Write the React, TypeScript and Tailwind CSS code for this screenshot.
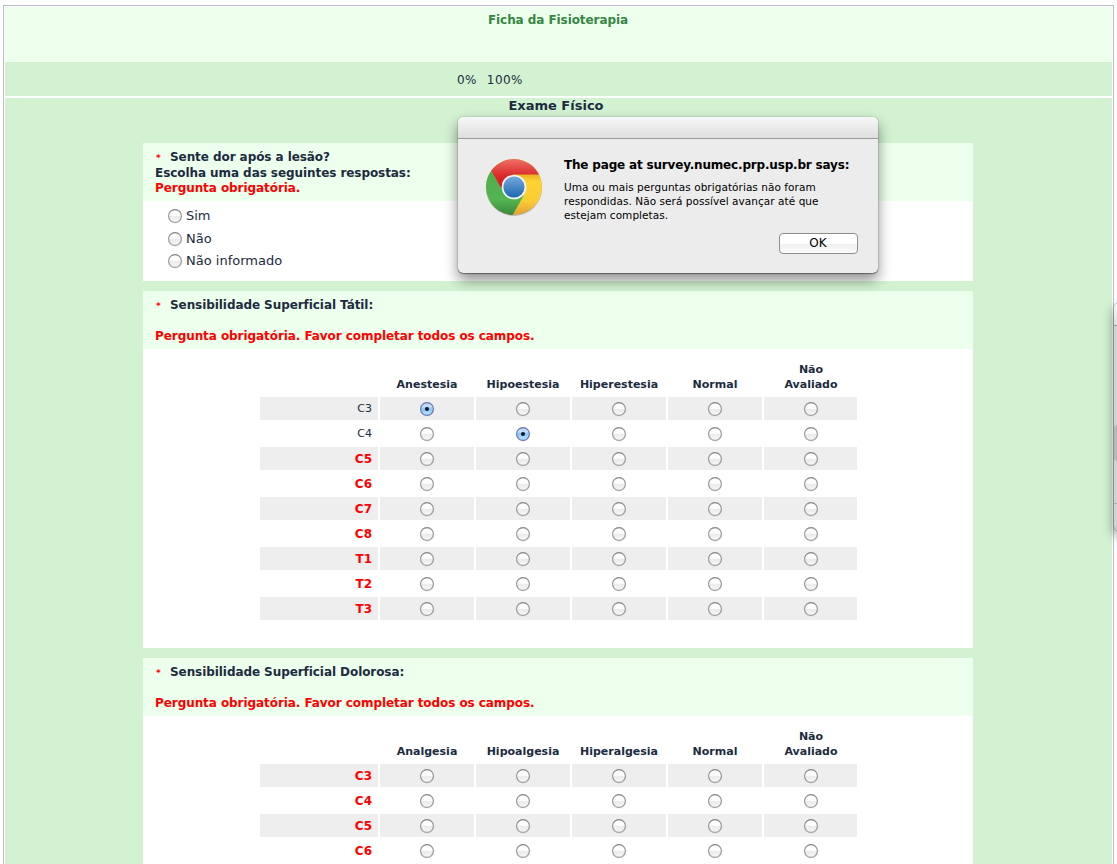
import React from "react";

type Row = { label: string; selected?: number; answered?: boolean };

function Radio({ on = false }: { on?: boolean }) {
  return (
    <svg className="block h-[16px] w-[16px] shrink-0" viewBox="0 0 16 16">
      <defs>
        <linearGradient id="radio-off" x1="0" y1="0" x2="0" y2="1">
          <stop offset="0" stopColor="#f3f3f3" />
          <stop offset=".2" stopColor="#ffffff" />
          <stop offset=".48" stopColor="#fbfbfb" />
          <stop offset=".54" stopColor="#ebebeb" />
          <stop offset="1" stopColor="#f8f8f8" />
        </linearGradient>
        <linearGradient id="radio-on" x1="0" y1="0" x2="0" y2="1">
          <stop offset="0" stopColor="#b7d2f2" />
          <stop offset=".3" stopColor="#c3def8" />
          <stop offset=".5" stopColor="#8fc4f4" />
          <stop offset="1" stopColor="#b5e6ff" />
        </linearGradient>
        <linearGradient id="radio-edge" x1="0" y1="0" x2="0" y2="1">
          <stop offset="0" stopColor="#868686" />
          <stop offset="1" stopColor="#a0a0a0" />
        </linearGradient>
      </defs>
      <circle cx="8" cy="8.4" r="6.8" fill="none" stroke="#000" strokeOpacity=".07" />
      <circle
        cx="8"
        cy="8"
        r="6.4"
        fill={on ? "url(#radio-on)" : "url(#radio-off)"}
        stroke={on ? "#6676b0" : "url(#radio-edge)"}
        strokeWidth="1.1"
      />
      {on && <circle cx="8" cy="8" r="2.1" fill="#0a1a35" />}
    </svg>
  );
}

function Title({ children }: { children: React.ReactNode }) {
  return (
    <div className="flex h-[16px] items-center whitespace-nowrap">
      <span className="w-[15px] pt-[2px] pl-px text-[9px] leading-[16px] text-[#ff0000]">*</span>
      <span>{children}</span>
    </div>
  );
}

function MatrixQuestion({
  title,
  columns,
  rows,
  name,
}: {
  title: string;
  columns: string[];
  rows: Row[];
  name: string;
}) {
  return (
    <section className="w-[830px] bg-white pb-[28px]">
      <header className="h-[58px] bg-[#edffed] px-[12px] pt-[6px] text-[12px] font-bold tracking-[-0.07px]">
        <Title>{title}</Title>
        <p className="mt-[15px] h-[16px] leading-[16px] whitespace-nowrap text-[#ff0000]">
          Pergunta obrigatória. Favor completar todos os campos.
        </p>
      </header>
      <div className="ml-[117px] flex flex-col gap-[2px] pt-[10px]">
        <div className="flex h-[36px] items-end gap-[2px] pb-[3px] text-[11px] leading-[15px] font-bold">
          <span className="w-[118px]" />
          {columns.map((c) => (
            <span key={c} className="w-[94px] text-center whitespace-pre-line">
              {c}
            </span>
          ))}
        </div>
        {rows.map((row, i) => (
          <div key={name + row.label} className="flex h-[23px] gap-[2px]">
            <div
              className={`flex w-[118px] items-center justify-end pr-[6px] ${
                i % 2 === 0 ? "bg-[#eeeeee]" : ""
              } ${row.answered ? "pt-[2px] text-[11px]" : "text-[12px] font-bold text-[#ff0000]"}`}
            >
              {row.label}
            </div>
            {columns.map((c, j) => (
              <div
                key={c}
                className={`flex justify-center pt-[4px] ${
                  j === columns.length - 1 ? "w-[93px] pl-px" : "w-[94px]"
                } ${i % 2 === 0 ? "bg-[#eeeeee]" : ""}`}
              >
                <Radio on={row.selected === j} />
              </div>
            ))}
          </div>
        ))}
      </div>
    </section>
  );
}

function ChromeLogo() {
  return (
    <svg className="block h-[60px] w-[60px]" viewBox="0 0 60 60">
      <defs>
        <linearGradient id="c-red" x1="0" y1="0" x2="0" y2="1">
          <stop offset="0" stopColor="#ee7163" />
          <stop offset=".55" stopColor="#da2a2c" />
          <stop offset="1" stopColor="#d2161d" />
        </linearGradient>
        <linearGradient id="c-yellow" x1="0" y1="0" x2="0" y2="1">
          <stop offset="0" stopColor="#e5ac25" />
          <stop offset=".28" stopColor="#e8b127" />
          <stop offset=".4" stopColor="#fdd232" />
          <stop offset=".75" stopColor="#fbcd34" />
          <stop offset="1" stopColor="#e0a038" />
        </linearGradient>
        <linearGradient id="c-green" x1="0" y1="0" x2="0" y2="1">
          <stop offset="0" stopColor="#4fae50" />
          <stop offset=".65" stopColor="#54b453" />
          <stop offset="1" stopColor="#388a3c" />
        </linearGradient>
        <linearGradient id="c-blue" x1="0" y1="0" x2="0" y2="1">
          <stop offset="0" stopColor="#77a9dc" />
          <stop offset="1" stopColor="#1c67b0" />
        </linearGradient>
      </defs>
      <circle cx="30" cy="30.8" r="28.2" fill="#000" opacity=".22" />
      <circle cx="30" cy="30" r="28" fill="url(#c-yellow)" />
      <path
        d="M7.2 13.8 A28 28 0 0 0 28.6 58 L39.9 38.2 L30 42 L17.6 31 Z"
        fill="url(#c-green)"
      />
      <path
        d="M7.2 13.8 A28 28 0 0 1 54.9 17.4 L30 17.4 L19 24 L17.6 31.8 Z"
        fill="url(#c-red)"
      />
      <circle cx="30" cy="30" r="12.3" fill="#f5f6f7" />
      <circle cx="30" cy="30" r="10.6" fill="url(#c-blue)" />
    </svg>
  );
}

function AlertDialog() {
  return (
    <div
      role="dialog"
      className="absolute top-[117px] left-[458px] h-[156px] w-[420px] overflow-visible rounded-[5px] bg-[#ececec] text-black shadow-[0_0_1px_rgba(0,0,0,0.7),0_1px_1px_rgba(0,0,0,0.35),0_7px_14px_rgba(0,0,0,0.45)]"
    >
      <div className="h-[22px] rounded-t-[5px] border-b border-[#9b9b9b] bg-linear-to-b from-[#f8f8f8] to-[#dedede]" />
      <div className="flex pt-[18px] pl-[26px]">
        <ChromeLogo />
        <div className="ml-[20px] w-[294px]">
          <h2 className="h-[16px] text-[12px] leading-[16px] font-bold tracking-[-0.18px] whitespace-nowrap">
            The page at survey.numec.prp.usp.br says:
          </h2>
          <p className="mt-[7px] text-[10.5px] leading-[14px] tracking-[0.05px] whitespace-nowrap">
            Uma ou mais perguntas obrigatórias não foram
            <br />
            respondidas. Não será possível avançar até que
            <br />
            estejam completas.
          </p>
          <button className="mt-[11px] ml-auto block h-[21px] w-[79px] rounded-[4px] border border-[#8e8e8e] bg-linear-to-b from-white from-50% via-[#f1f1f1] via-55% to-[#fbfbfb] pr-px text-[12px] leading-[19px]">
            OK
          </button>
        </div>
      </div>
    </div>
  );
}

function EdgeWindow() {
  return (
    <div className="absolute top-[303px] left-[1114px] h-[228px] w-[20px] rounded-[5px] bg-[#d3d3d3] shadow-[0_0_1px_rgba(0,0,0,0.7),0_5px_12px_rgba(0,0,0,0.45)]">
      <div className="h-[23px] rounded-t-[5px] border-b border-[#9b9b9b] bg-linear-to-b from-[#fafafa] to-[#e0e0e0]" />
      <div className="mt-[99px] h-[36px] rounded-l-[3px] bg-[#b8b8b8]" />
      <div className="mt-[42px] border-t border-[#b0b0b0]" />
    </div>
  );
}

const tactile: Row[] = [
  { label: "C3", selected: 0, answered: true },
  { label: "C4", selected: 1, answered: true },
  { label: "C5" },
  { label: "C6" },
  { label: "C7" },
  { label: "C8" },
  { label: "T1" },
  { label: "T2" },
  { label: "T3" },
];

const painful: Row[] = [
  { label: "C3" },
  { label: "C4" },
  { label: "C5" },
  { label: "C6" },
];

export default function App() {
  return (
    <div className="relative h-[864px] w-[1117px] overflow-hidden bg-white pt-[5px] pl-[3px] font-['Verdana','DejaVu_Sans',sans-serif] text-[#1c2b40]">
      <div className="h-[900px] w-[1111px] border border-[#bcbdc6] p-px">
        <div className="h-[55px] bg-[#edffed] pt-[5px] pr-px text-center text-[12px] leading-[16px] font-bold tracking-[-0.07px] text-[#358642]">
          Ficha da Fisioterapia
        </div>
        <div className="flex h-[34px] items-center gap-[10px] bg-[#d2f2d2] pt-[2px] pl-[452px] text-[12px] tracking-[0.4px]">
          <span>0%</span>
          <span>100%</span>
        </div>
        <main className="mt-[2px] flex h-[900px] flex-col items-center gap-[10px] bg-[#d2f2d2] pr-px">
          <h1 className="h-[35px] pr-[4px] text-[13px] leading-[16px] font-bold">Exame Físico</h1>
          <section className="h-[138px] w-[830px] bg-white">
            <header className="h-[58px] bg-[#edffed] px-[12px] pt-[6px] text-[12px] leading-[16px] font-bold tracking-[-0.07px] whitespace-nowrap">
              <Title>Sente dor após a lesão?</Title>
              <p>Escolha uma das seguintes respostas:</p>
              <p className="leading-[15px] text-[#ff0000]">Pergunta obrigatória.</p>
            </header>
            <div className="flex flex-col gap-[7px] pt-[7px] pl-[24px] text-[13px] leading-[16px]">
              {["Sim", "Não", "Não informado"].map((o) => (
                <label key={o} className="flex h-[16px] items-center gap-[3px] last:-mt-px">
                  <Radio />
                  <span>{o}</span>
                </label>
              ))}
            </div>
          </section>
          <MatrixQuestion
            name="tatil"
            title="Sensibilidade Superficial Tátil:"
            columns={["Anestesia", "Hipoestesia", "Hiperestesia", "Normal", "Não\nAvaliado"]}
            rows={tactile}
          />
          <MatrixQuestion
            name="dolorosa"
            title="Sensibilidade Superficial Dolorosa:"
            columns={["Analgesia", "Hipoalgesia", "Hiperalgesia", "Normal", "Não\nAvaliado"]}
            rows={painful}
          />
        </main>
      </div>
      <AlertDialog />
      <EdgeWindow />
    </div>
  );
}
